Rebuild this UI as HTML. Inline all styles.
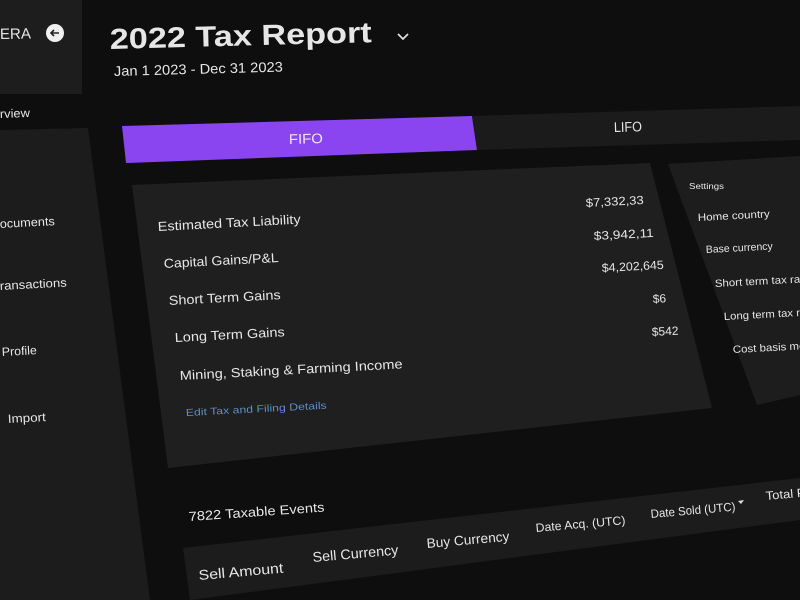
<!DOCTYPE html>
<html><head><meta charset="utf-8"><style>
html,body{margin:0;padding:0;background:#0e0e0e;width:800px;height:600px;overflow:hidden}
svg{display:block}
text{font-family:"Liberation Sans",sans-serif;fill:#e6e6e6}
</style></head><body>
<svg width="800" height="600" viewBox="0 0 800 600">
<rect width="800" height="600" fill="#0e0e0e"/>
<polygon points="0,0 82,0 82,94 0,94" fill="#1d1d1d"/>
<polygon points="0,130 88,128 150,600 0,600" fill="#1c1c1c"/>
<text x="0" y="39" font-size="15" textLength="31" lengthAdjust="spacingAndGlyphs" transform="rotate(-1 0 39)">ERA</text>
<circle cx="55" cy="33" r="9" fill="#f0f0f0"/>
<path d="M59 33 H51 M54 30 L51 33 L54 36" stroke="#222" stroke-width="1.6" fill="none"/>
<text x="0" y="118" font-size="12" textLength="30" lengthAdjust="spacingAndGlyphs" transform="rotate(-2 0 118)">rview</text>
<text x="0" y="228" font-size="12" textLength="55" lengthAdjust="spacingAndGlyphs" transform="rotate(-3 0 228)">ocuments</text>
<text x="0" y="290" font-size="12" textLength="67" lengthAdjust="spacingAndGlyphs" transform="rotate(-3 0 290)">ransactions</text>
<text x="2" y="356" font-size="12" textLength="35" lengthAdjust="spacingAndGlyphs" transform="rotate(-3 2 356)">Profile</text>
<text x="8" y="423" font-size="12" textLength="38" lengthAdjust="spacingAndGlyphs" transform="rotate(-3 8 423)">Import</text>
<text x="110" y="49" font-size="29" font-weight="bold" textLength="262" lengthAdjust="spacingAndGlyphs" transform="rotate(-1.5 110 49)">2022 Tax Report</text>
<path d="M398 34 L403 39 L408 34" stroke="#ddd" stroke-width="1.8" fill="none"/>
<text x="114" y="76" font-size="14" textLength="169" lengthAdjust="spacingAndGlyphs" transform="rotate(-1.5 114 76)">Jan 1 2023 - Dec 31 2023</text>
<polygon points="122,126 472,116 477,150 126,163" fill="#8a45f0"/>
<polygon points="472,116 800,106 800,140 477,150" fill="#1b1b1b"/>
<text x="289" y="144" font-size="14" textLength="34" lengthAdjust="spacingAndGlyphs" transform="rotate(-1.5 289 144)" style="fill:#efe6ff">FIFO</text>
<text x="614" y="132" font-size="14" textLength="28" lengthAdjust="spacingAndGlyphs" transform="rotate(-1.5 614 132)">LIFO</text>
<polygon points="132,185 650,163 712,408 168,468" fill="#1f1f1f"/>
<text x="158" y="231" font-size="13" textLength="143" lengthAdjust="spacingAndGlyphs" transform="rotate(-3 158 231)">Estimated Tax Liability</text>
<text x="164" y="268" font-size="13" textLength="115" lengthAdjust="spacingAndGlyphs" transform="rotate(-3 164 268)">Capital Gains/P&amp;L</text>
<text x="169" y="305" font-size="13" textLength="112" lengthAdjust="spacingAndGlyphs" transform="rotate(-3 169 305)">Short Term Gains</text>
<text x="175" y="342" font-size="13" textLength="110" lengthAdjust="spacingAndGlyphs" transform="rotate(-3 175 342)">Long Term Gains</text>
<text x="180" y="380" font-size="13" textLength="223" lengthAdjust="spacingAndGlyphs" transform="rotate(-3 180 380)">Mining, Staking &amp; Farming Income</text>
<text x="186" y="416" font-size="10" textLength="141" lengthAdjust="spacingAndGlyphs" transform="rotate(-3 186 416)" style="fill:#5b8fc9">Edit Tax and Filing Details</text>
<text x="586" y="207" font-size="12" textLength="58" lengthAdjust="spacingAndGlyphs" transform="rotate(-3 586 207)">$7,332,33</text>
<text x="594" y="240" font-size="12" textLength="60" lengthAdjust="spacingAndGlyphs" transform="rotate(-3 594 240)">$3,942,11</text>
<text x="602" y="272" font-size="12" textLength="62" lengthAdjust="spacingAndGlyphs" transform="rotate(-3 602 272)">$4,202,645</text>
<text x="653" y="303" font-size="12" transform="rotate(-3 653 303)">$6</text>
<text x="652" y="336" font-size="12" transform="rotate(-3 652 336)">$542</text>
<polygon points="668,164 800,156 800,395 757,405" fill="#1d1d1d"/>
<text x="689" y="189" font-size="8" textLength="35" lengthAdjust="spacingAndGlyphs">Settings</text>
<text x="698" y="221" font-size="10.5" textLength="72" lengthAdjust="spacingAndGlyphs" transform="rotate(-3 698 221)">Home country</text>
<text x="706" y="253" font-size="10.5" textLength="67" lengthAdjust="spacingAndGlyphs" transform="rotate(-3 706 253)">Base currency</text>
<text x="715" y="287" font-size="10.5" textLength="95" lengthAdjust="spacingAndGlyphs" transform="rotate(-3 715 287)">Short term tax rate</text>
<text x="724" y="320" font-size="10.5" textLength="92" lengthAdjust="spacingAndGlyphs" transform="rotate(-3 724 320)">Long term tax rate</text>
<text x="733" y="353" font-size="10.5" textLength="95" lengthAdjust="spacingAndGlyphs" transform="rotate(-3 733 353)">Cost basis method</text>
<text x="189" y="521" font-size="13" textLength="136" lengthAdjust="spacingAndGlyphs" transform="rotate(-4 189 521)">7822 Taxable Events</text>
<polygon points="183,548 800,478 800,520 190,600" fill="#1c1c1c"/>
<text x="199" y="580" font-size="14" textLength="85" lengthAdjust="spacingAndGlyphs" transform="rotate(-5 199 580)">Sell Amount</text>
<text x="313" y="562" font-size="14" textLength="86" lengthAdjust="spacingAndGlyphs" transform="rotate(-5 313 562)">Sell Currency</text>
<text x="427" y="548" font-size="13.5" textLength="83" lengthAdjust="spacingAndGlyphs" transform="rotate(-5 427 548)">Buy Currency</text>
<text x="536" y="532" font-size="12" textLength="90" lengthAdjust="spacingAndGlyphs" transform="rotate(-5 536 532)">Date Acq. (UTC)</text>
<text x="651" y="518" font-size="12" textLength="85" lengthAdjust="spacingAndGlyphs" transform="rotate(-5 651 518)">Date Sold (UTC)</text>
<path d="M738 501 L744 500 L741 504 Z" fill="#ddd"/>
<text x="766" y="500" font-size="12" textLength="40" lengthAdjust="spacingAndGlyphs" transform="rotate(-5 766 500)">Total P</text>
</svg>
</body></html>
